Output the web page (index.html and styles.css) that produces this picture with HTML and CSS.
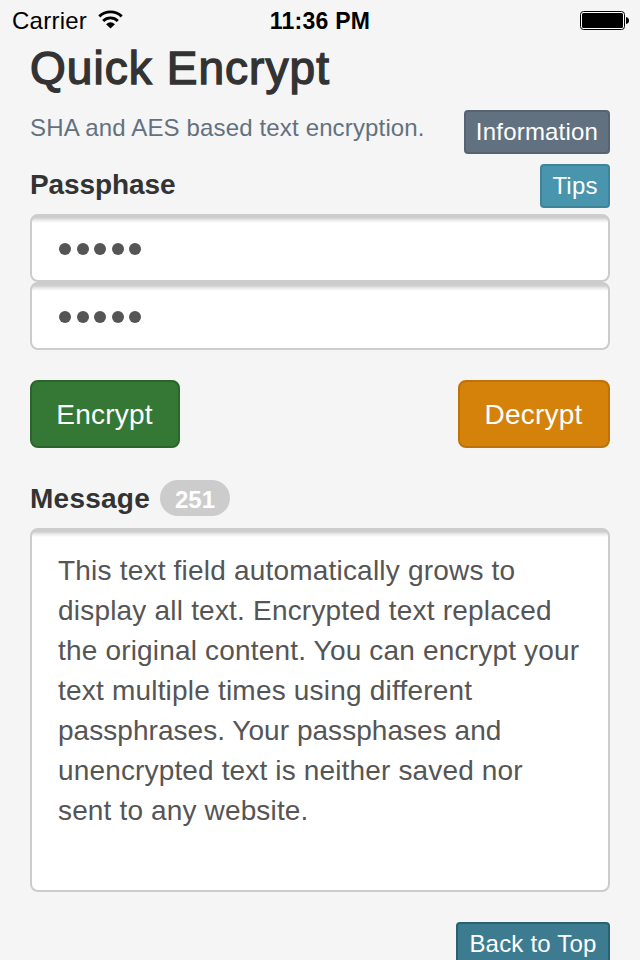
FILE: index.html
```html
<!DOCTYPE html>
<html lang="en">
<head>
<meta charset="utf-8">
<title>Quick Encrypt</title>
<link rel="stylesheet" href="styles.css">
</head>
<body>
<header class="status">
  <div class="carrier"><span>Carrier</span>
    <svg class="wifi" width="25" height="20" viewBox="0 0 25 20"><g fill="none" stroke="#000" stroke-width="2.900"><path d="M1.300 6.400a16 16 0 0 1 22.400 0"/><path d="M5.200 10.900a10.300 10.300 0 0 1 14.600 0"/></g><path d="M8 14.200Q12.500 10.400 17 14.200L12.500 18.600z"/></svg>
  </div>
  <time class="clock">11:36 PM</time>
  <svg class="battery" width="50" height="20" viewBox="0 0 50 20"><rect x=".5" y=".5" width="44" height="18" rx="3" fill="#fff" stroke="#000"/><rect x="2" y="2" width="41" height="15" rx="1.5"/><path d="M46 6q3 .5 3 3.500t-3 3.500z"/></svg>
</header>
<main class="page">
  <h1 class="title">Quick Encrypt</h1>
  <div class="intro">
    <p class="lead">SHA and AES based text encryption.</p>
    <button class="btn small info">Information</button>
  </div>
  <div class="row pass-head">
    <h2 class="label pass-label">Passphase</h2>
    <button class="btn small tips">Tips</button>
  </div>
  <div class="field password"><i></i><i></i><i></i><i></i><i></i></div>
  <div class="field password"><i></i><i></i><i></i><i></i><i></i></div>
  <div class="row actions">
    <button class="btn large encrypt">Encrypt</button>
    <button class="btn large decrypt">Decrypt</button>
  </div>
  <div class="message-head">
    <h2 class="label message-label">Message</h2>
    <span class="badge">251</span>
  </div>
  <div class="field message">
    <div class="l1">This text field automatically grows to</div>
    <div class="l2">display all text. Encrypted text replaced</div>
    <div class="l3">the original content. You can encrypt your</div>
    <div class="l4">text multiple times using different</div>
    <div class="l5">passphrases. Your passphases and</div>
    <div class="l6">unencrypted text is neither saved nor</div>
    <div class="l7">sent to any website.</div>
  </div>
  <div class="foot"><button class="btn small top">Back to Top</button></div>
</main>
</body>
</html>
```
FILE: styles.css
```css
* { box-sizing: border-box; }
html { height: 100%; overflow: hidden; }
body {
  margin: 0;
  height: 960px;
  overflow: hidden;
  background: #f5f5f5;
  color: #333;
  font-family: "Liberation Sans", Arial, sans-serif;
  font-size: 28px;
}
h1, h2, p { margin: 0; }
.status {
  display: grid;
  grid-template-columns: 1fr auto 1fr;
  align-items: center;
  height: 40px;
  padding: 2px 10px 0 12px;
  color: #000;
  font-size: 24px;
}
.carrier { display: flex; align-items: center; gap: 11px; letter-spacing: .25px; }
.wifi { margin-bottom: 2px; }
.clock { font-weight: bold; font-size: 23px; letter-spacing: .25px; margin-right: 2px; white-space: nowrap; }
.battery { justify-self: end; }
.page { padding: 0 30px; }
.title {
  height: 70px;
  line-height: 56px;
  font-size: 46px;
  font-weight: normal;
  letter-spacing: 1.050px;
  -webkit-text-stroke: 1.4px #333;
  white-space: nowrap;
}
.intro, .row { display: flex; justify-content: space-between; }
.intro { height: 54px; }
.lead { color: #62717f; font-size: 24px; line-height: 36px; letter-spacing: .15px; white-space: nowrap; }
.label { font-size: 28px; line-height: 40px; font-weight: bold; padding-top: 1px; }
.pass-label { letter-spacing: -.1px; }
.pass-head { height: 50px; }
.btn {
  display: flex;
  align-items: center;
  justify-content: center;
  padding: 0;
  font: inherit;
  letter-spacing: .2px;
  color: #fff;
  border: 2px solid;
  white-space: nowrap;
}
.small { height: 44px; border-radius: 4px; font-size: 24px; }
.large { height: 68px; border-radius: 8px; padding: 2px 1px 0 0; }
.info { width: 146px; background: #62717f; border-color: #566370; }
.tips { width: 70px; background: #4995ad; border-color: #408499; }
.encrypt { width: 150px; background: #357735; border-color: #2c652c; }
.decrypt { width: 152px; background: #d5820b; border-color: #bd730a; }
.top { width: 154px; background: #3d7c90; border-color: #2a6070; }
.field {
  border: 2px solid #ccc;
  border-radius: 8px;
  background: linear-gradient(#ccc 0, #d0d0d0 2px, #e9e9e9 4px, #fff 7px);
  color: #555;
}
.password { height: 68px; display: flex; align-items: center; gap: 5.500px; padding: 1px 26px 0 27px; }
.password i { width: 12px; height: 12px; border-radius: 50%; background: #555; }
.actions { margin-top: 30px; }
.message-head { display: flex; align-items: center; gap: 10px; margin-top: 32px; height: 36px; }
.message-label { width: 120px; letter-spacing: .25px; white-space: nowrap; }
.badge {
  width: 70px;
  height: 36px;
  border-radius: 18px;
  background: #ccc;
  color: #fff;
  font-size: 24px;
  line-height: 39px;
  font-weight: bold;
  text-align: center;
}
.message { margin-top: 12px; height: 364px; padding: 21px 0 0 26px; line-height: 40px; white-space: nowrap; }
.l1, .l2, .l4 { letter-spacing: .2px; }
.l3 { letter-spacing: .18px; }
.l5 { letter-spacing: .04px; }
.l6, .l7 { letter-spacing: .15px; }
.foot { display: flex; justify-content: flex-end; margin-top: 30px; }
```
